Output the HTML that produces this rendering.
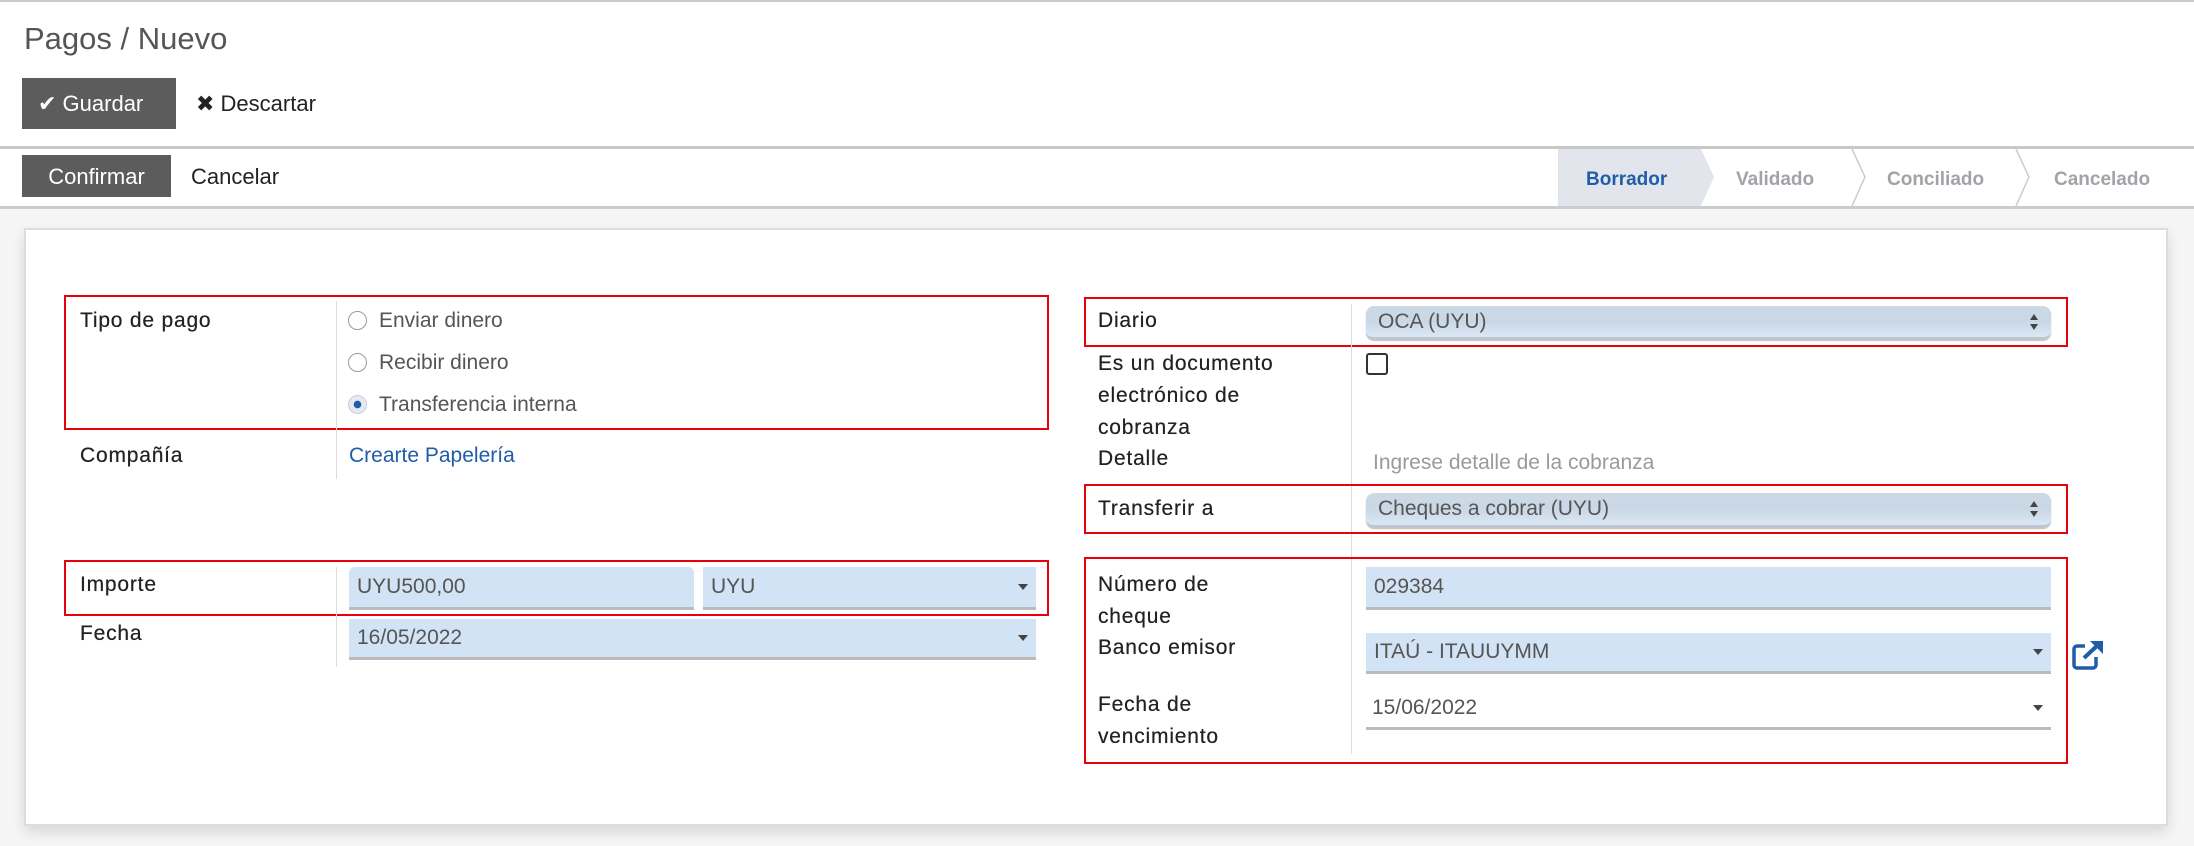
<!DOCTYPE html>
<html><head><meta charset="utf-8"><style>
*{box-sizing:border-box;margin:0;padding:0}
body{width:2194px;height:846px;position:relative;background:#fff;font-family:"Liberation Sans",sans-serif;color:#4c4c4c;overflow:hidden}
.a{position:absolute;white-space:nowrap}
.lbl{font-size:21px;color:#222;letter-spacing:0.8px;text-shadow:0 0 0.4px #222}
.txt{font-size:21px;color:#555}
.red{position:absolute;border:2px solid #e8000b}
.sep{position:absolute;width:1px;background:#ddd}
.inp{position:absolute;background:#d2e3f5;border-bottom:3px solid #bbb;font-size:21px;color:#555;padding-left:8px;display:flex;align-items:center}
.caret{position:absolute;right:8px;top:50%;margin-top:-3px;border-left:5px solid transparent;border-right:5px solid transparent;border-top:6px solid #444}
.sel{position:absolute;border-radius:8px;background:linear-gradient(#cdd9e5,#c9d8e6 50%,#dbe7f4);border-bottom:3px solid #bfc6cf;font-size:21px;color:#555;padding-left:12px;display:flex;align-items:center;box-shadow:0 1px 1px #bbb}
.ud{position:absolute;right:12px;top:50%;margin-top:-9px;width:10px;height:18px}
.radio{position:absolute;width:19px;height:19px;border:1.5px solid #999;border-radius:50%}
</style></head><body>
<div class="a" style="left:0;top:0;width:2194px;height:2px;background:#ccc"></div>
<div class="a" style="left:24px;top:21px;font-size:31px;color:#555">Pagos / Nuevo</div>
<div class="a" style="left:22px;top:78px;width:154px;height:51px;background:#5c5c5c;color:#fff;font-size:22px;line-height:51px;padding-left:16px">✔ Guardar</div>
<div class="a" style="left:196px;top:78px;font-size:22px;line-height:51px;color:#222">✖ Descartar</div>
<div class="a" style="left:0;top:146px;width:2194px;height:3px;background:#c8c8c8"></div>
<div class="a" style="left:22px;top:155px;width:149px;height:42px;background:#5c5c5c;color:#fff;font-size:22px;line-height:44px;text-align:center">Confirmar</div>
<div class="a" style="left:191px;top:155px;font-size:22px;line-height:44px;color:#222">Cancelar</div>
<svg class="a" style="left:1558px;top:149px" width="636" height="57">
<polygon points="0,0 143,0 156,28 143,57 0,57" fill="#e2e6ec"/>
<polyline points="294,0 307,28 294,57" fill="none" stroke="#ccc" stroke-width="1.5"/>
<polyline points="458,0 471,28 458,57" fill="none" stroke="#ccc" stroke-width="1.5"/>
<line x1="0" y1="0" x2="0" y2="57" stroke="#ddd"/>
<text x="28" y="36" font-size="19" font-weight="bold" fill="#1f5da8" font-family="Liberation Sans">Borrador</text>
<text x="178" y="36" font-size="19" font-weight="bold" fill="#a0a4a8" font-family="Liberation Sans">Validado</text>
<text x="329" y="36" font-size="19" font-weight="bold" fill="#a0a4a8" font-family="Liberation Sans">Conciliado</text>
<text x="496" y="36" font-size="19" font-weight="bold" fill="#a0a4a8" font-family="Liberation Sans">Cancelado</text>
</svg>
<div class="a" style="left:0;top:206px;width:2194px;height:3px;background:#c9ccd3"></div>
<div class="a" style="left:0;top:209px;width:2194px;height:637px;background:#f5f5f5"></div>
<div class="a" style="left:24px;top:228px;width:2144px;height:598px;background:#fff;border:2px solid #ddd;box-shadow:0 6px 12px rgba(0,0,0,.12)"></div>

<!-- left -->
<div class="red" style="left:64px;top:295px;width:985px;height:135px"></div>
<div class="sep" style="left:336px;top:301px;height:178px"></div>
<div class="a lbl" style="left:80px;top:309px">Tipo de pago</div>
<div class="radio" style="left:348px;top:311px"></div>
<div class="a txt" style="left:379px;top:309px">Enviar dinero</div>
<div class="radio" style="left:348px;top:353px"></div>
<div class="a txt" style="left:379px;top:351px">Recibir dinero</div>
<div class="radio" style="left:348px;top:395px;border-color:#ccd;background:radial-gradient(circle,#1f5da8 0 3.5px,#e6e9ef 4px)"></div>
<div class="a txt" style="left:379px;top:393px">Transferencia interna</div>
<div class="a lbl" style="left:80px;top:444px">Compañía</div>
<div class="a" style="left:349px;top:444px;font-size:21px;color:#1f5da8">Crearte Papelería</div>

<div class="red" style="left:64px;top:560px;width:985px;height:56px"></div>
<div class="sep" style="left:336px;top:567px;height:100px"></div>
<div class="a lbl" style="left:80px;top:573px">Importe</div>
<div class="inp" style="left:349px;top:567px;width:345px;height:43px;border-radius:6px 6px 0 0">UYU500,00</div>
<div class="inp" style="left:703px;top:567px;width:333px;height:43px">UYU<span class="caret"></span></div>
<div class="a lbl" style="left:80px;top:622px">Fecha</div>
<div class="inp" style="left:349px;top:619px;width:687px;height:41px">16/05/2022<span class="caret"></span></div>

<!-- right -->
<div class="red" style="left:1084px;top:297px;width:984px;height:50px"></div>
<div class="sep" style="left:1351px;top:304px;height:450px"></div>
<div class="a lbl" style="left:1098px;top:309px">Diario</div>
<div class="sel" style="left:1366px;top:306px;width:685px;height:34px">OCA (UYU)<svg class="ud" viewBox="0 0 10 18"><path d="M5 1 9 7H1zM5 17 9 11H1z" fill="#444"/></svg></div>
<div class="a" style="left:1366px;top:353px;width:22px;height:22px;border:2px solid #333;border-radius:3px;background:#fff"></div>
<div class="a lbl" style="left:1098px;top:348px;line-height:32px">Es un documento<br>electrónico de<br>cobranza</div>
<div class="a lbl" style="left:1098px;top:447px">Detalle</div>
<div class="a" style="left:1373px;top:451px;font-size:21px;color:#9a9a9a">Ingrese detalle de la cobranza</div>

<div class="red" style="left:1084px;top:484px;width:984px;height:50px"></div>
<div class="a lbl" style="left:1098px;top:497px">Transferir a</div>
<div class="sel" style="left:1366px;top:493px;width:685px;height:35px">Cheques a cobrar (UYU)<svg class="ud" viewBox="0 0 10 18"><path d="M5 1 9 7H1zM5 17 9 11H1z" fill="#444"/></svg></div>

<div class="red" style="left:1084px;top:557px;width:984px;height:207px"></div>
<div class="a lbl" style="left:1098px;top:569px;line-height:32px">Número de<br>cheque</div>
<div class="inp" style="left:1366px;top:567px;width:685px;height:43px">029384</div>
<div class="a lbl" style="left:1098px;top:636px">Banco emisor</div>
<div class="inp" style="left:1366px;top:633px;width:685px;height:41px">ITAÚ - ITAUUYMM<span class="caret"></span></div>
<svg class="a" style="left:2071px;top:639px" width="34" height="32" viewBox="0 0 34 32"><path d="M14 7H6a3 3 0 0 0-3 3v16a3 3 0 0 0 3 3h16a3 3 0 0 0 3-3v-8" fill="none" stroke="#1f5da8" stroke-width="3.5"/><path d="M13 19 28 5" stroke="#1f5da8" stroke-width="4"/><path d="M19 2h13v13z" fill="#1f5da8"/></svg>
<div class="a lbl" style="left:1098px;top:689px;line-height:32px">Fecha de<br>vencimiento</div>
<div class="a" style="left:1366px;top:688px;width:685px;height:42px;border-bottom:3px solid #bbb;font-size:21px;color:#555;padding-left:6px;line-height:40px">15/06/2022<span class="caret"></span></div>
</body></html>
